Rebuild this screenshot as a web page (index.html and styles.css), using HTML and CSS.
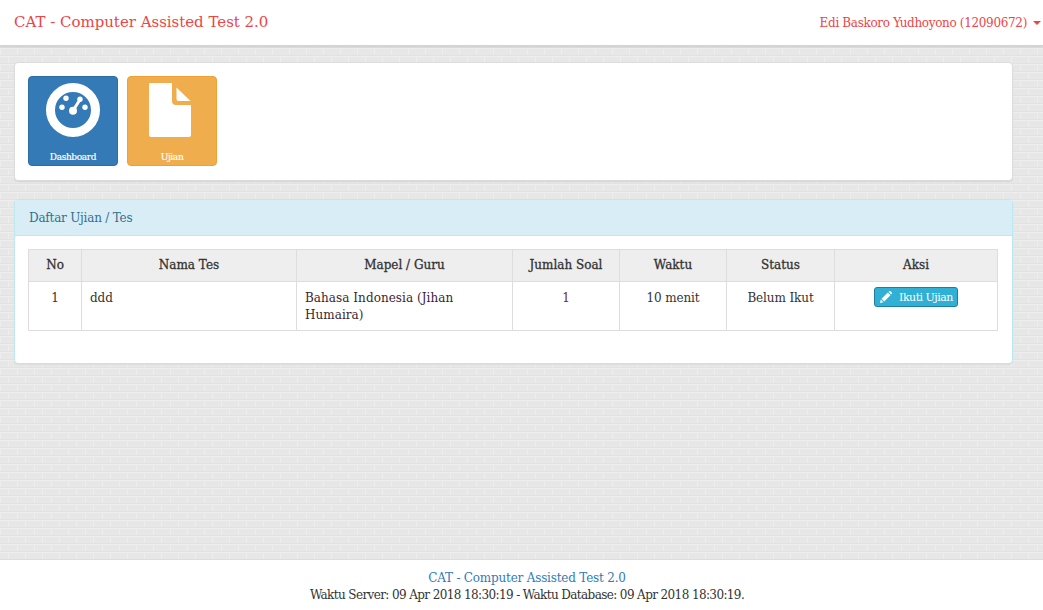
FILE: index.html
```html
<!DOCTYPE html>
<html lang="id">
<head>
<meta charset="utf-8">
<title>CAT - Computer Assisted Test 2.0</title>
<link rel="stylesheet" href="styles.css">
</head>
<body>
<header class="navbar">
  <a class="brand">CAT - Computer Assisted Test 2.0</a>
  <a class="user">Edi Baskoro Yudhoyono (12090672)<span class="caret"></span></a>
</header>
<main class="content">
  <section class="card menu">
    <a class="tile tile-blue">
      <svg class="tile-icon" viewBox="0 0 54 54" width="54" height="54">
        <circle cx="27" cy="27" r="22.500" fill="none" stroke="#fff" stroke-width="9"></circle>
        <circle cx="27" cy="27.700" r="4" fill="#fff"></circle>
        <path d="M27 27.700 L34 16.500" stroke="#fff" stroke-width="3" fill="none"></path>
        <circle cx="34" cy="16.300" r="2.700" fill="#fff"></circle>
        <circle cx="20" cy="15.300" r="2.700" fill="#fff"></circle>
        <circle cx="16" cy="24.300" r="2.700" fill="#fff"></circle>
        <circle cx="39" cy="24.300" r="2.700" fill="#fff"></circle>
      </svg>
      <span class="tile-label">Dashboard</span>
    </a>
    <a class="tile tile-orange">
      <svg class="tile-icon tile-icon-doc" viewBox="0 0 42 54" width="42" height="54">
        <path d="M1 0H23V18a4 4 0 0 0 4 4H42V52a2 2 0 0 1-2 2H2a2 2 0 0 1-2-2V1a1 1 0 0 1 1-1Z" fill="#fff"></path>
        <path d="M27.500 4.500 L41.500 18 H29.500 a2 2 0 0 1-2-2Z" fill="#fff"></path>
      </svg>
      <span class="tile-label">Ujian</span>
    </a>
  </section>
  <section class="panel">
    <h2 class="panel-heading">Daftar Ujian / Tes</h2>
    <div class="panel-body">
      <table class="data">
        <colgroup>
          <col class="c-no"><col class="c-nama"><col class="c-mapel"><col class="c-jumlah"><col class="c-waktu"><col class="c-status"><col class="c-aksi">
        </colgroup>
        <thead>
          <tr><th>No</th><th>Nama Tes</th><th>Mapel / Guru</th><th>Jumlah Soal</th><th>Waktu</th><th>Status</th><th>Aksi</th></tr>
        </thead>
        <tbody>
          <tr>
            <td class="center">1</td>
            <td>ddd</td>
            <td class="mapel">Bahasa Indonesia (Jihan Humaira)</td>
            <td class="center jumlah">1</td>
            <td class="center">10 menit</td>
            <td class="center">Belum Ikut</td>
            <td class="center action">
              <a class="btn">
                <svg viewBox="0 0 12 12" width="12" height="12"><path d="M0 12 L0.800 8.600 L3.400 11.200 Z M1.500 7.800 L7.800 1.500 L10.500 4.200 L4.200 10.500 Z M8.500 0.800 L9.200 0.200 Q9.800 -0.200 10.400 0.200 L11.800 1.600 Q12.200 2.200 11.800 2.800 L11.200 3.500 Z" fill="#fff"></path></svg>
                Ikuti Ujian
              </a>
            </td>
          </tr>
        </tbody>
      </table>
    </div>
  </section>
</main>
<footer class="footer">
  <div class="footer-title">CAT - Computer Assisted Test 2.0</div>
  <div class="footer-time">Waktu Server: 09 Apr 2018 18:30:19 - Waktu Database: 09 Apr 2018 18:30:19.</div>
</footer>
</body>
</html>
```
FILE: styles.css
```css
* { box-sizing: border-box; }
html, body { margin: 0; height: 100%; }
body {
  display: flex;
  flex-direction: column;
  height: 610px;
  overflow: hidden;
  font-family: "DejaVu Serif", "Liberation Serif", serif;
  font-size: 12px;
  line-height: 17px;
  color: #333;
  background-color: #e7e7e7;
  background-image: url("data:image/svg+xml,%3Csvg xmlns='http://www.w3.org/2000/svg' width='34' height='16'%3E%3Cpath d='M0 .5H34M0 8.500H34M.5 0V8M17.500 0V8M8.500 8V16M25.500 8V16' stroke='%23eeeeee' fill='none'/%3E%3Cpath d='M0 7.500H34M0 15.500H34' stroke='%23e2e2e2' fill='none'/%3E%3C/svg%3E");
}
.navbar {
  height: 46px;
  flex: none;
  display: flex;
  align-items: center;
  justify-content: space-between;
  padding: 0 2px 0 14px;
  background: #fff;
  border-bottom: 1px solid #d4d4d4;
  box-shadow: 0 1px 2px rgba(0,0,0,.12);
  color: #ef4444;
}
.brand { font-size: 15px; letter-spacing: -0.02px; }
.user { font-size: 12px; letter-spacing: -0.33px; margin-top: 1px; }
.caret {
  display: inline-block;
  margin-left: 6px;
  vertical-align: middle;
  border-top: 4px solid #ef4444;
  border-left: 4px solid transparent;
  border-right: 4px solid transparent;
}
.content {
  flex: 1;
  padding: 16px 30px 0 14px;
}
.card {
  background: #fff;
  border: 1px solid #dcdcdc;
  border-radius: 4px;
  box-shadow: 0 1px 1px rgba(0,0,0,.08);
}
.menu {
  height: 119px;
  padding: 13px;
  display: flex;
  gap: 9px;
  margin-bottom: 18px;
}
.tile {
  width: 90px;
  height: 90px;
  border-radius: 4px;
  color: #fff;
  display: flex;
  flex-direction: column;
  align-items: center;
  padding-top: 6px;
}
.tile-blue { background: #337ab7; border: 1px solid #2e6da4; }
.tile-orange { background: #f0ad4e; border: 1px solid #eea236; }
.tile-icon { display: block; flex: none; }
.tile-icon-doc { margin-right: 4px; }
.tile-label {
  margin-top: 14px;
  font-size: 9px;
  line-height: 12px;
  letter-spacing: -0.35px;
  -webkit-text-stroke: 0.2px #fff;
}
.panel {
  height: 165px;
  background: #fff;
  border: 1px solid #bce8f1;
  border-radius: 4px;
  box-shadow: 0 1px 1px rgba(0,0,0,.05);
}
.panel-heading {
  margin: 0;
  height: 36px;
  padding: 2px 14px 0;
  display: flex;
  align-items: center;
  font-size: 12px;
  font-weight: 400;
  letter-spacing: -0.22px;
  color: #31708f;
  background: #d9edf7;
  border-bottom: 1px solid #bce8f1;
}
.panel-body { padding: 13px 14px 0 13px; }
.data {
  width: 969px;
  table-layout: fixed;
  border-collapse: collapse;
}
.c-no { width: 53px; }
.c-nama { width: 215px; }
.c-mapel { width: 216px; }
.c-jumlah { width: 107px; }
.c-waktu { width: 107px; }
.c-status { width: 108px; }
.c-aksi { width: 163px; }
.data th, .data td { border: 1px solid #ddd; padding: 8px 8px 6px; vertical-align: top; }
.data th {
  height: 32px;
  padding: 7px 8px;
  background: #eee;
  font-weight: 400;
  text-align: center;
  -webkit-text-stroke: 0.3px #333;
}
.data td { height: 49px; letter-spacing: -0.1px; }
.center { text-align: center; }
.data .mapel { color: #3a1f33; letter-spacing: 0.05px; }
.jumlah { color: #7a1f2b; }
.data .action { padding-top: 5px; }
.btn {
  display: inline-flex;
  align-items: center;
  gap: 7px;
  height: 20px;
  padding: 0 4px 0 5px;
  font-size: 11px;
  letter-spacing: -0.5px;
  color: #fff;
  background: #31b0d5;
  border: 1px solid #1f7e9a;
  border-radius: 3px;
}
.footer {
  height: 51px;
  flex: none;
  background: #fff;
  border-top: 1px solid #ddd;
  text-align: center;
  padding: 10px 0 0 11px;
}
.footer-title { color: #337ab7; letter-spacing: -0.2px; }
.footer-time { letter-spacing: -0.61px; }
```
